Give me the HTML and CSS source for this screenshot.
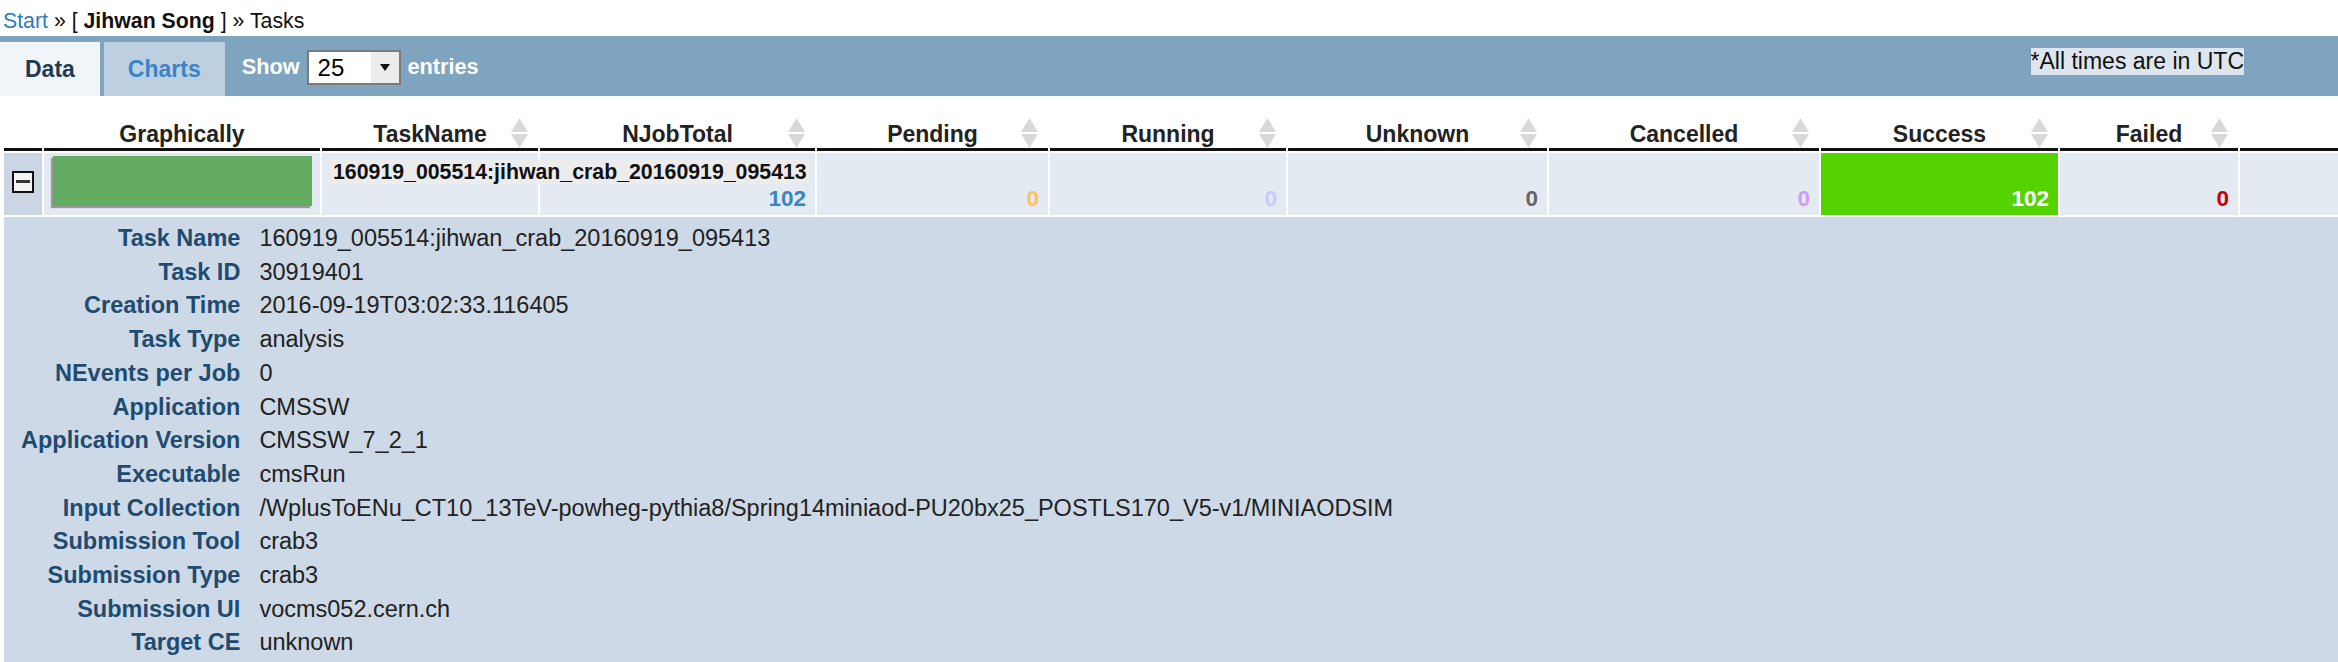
FILE: index.html
```html
<!DOCTYPE html>
<html lang="en">
<head>
    <meta charset="UTF-8">
    <title>Tasks - Jihwan Song</title>
    <link rel="stylesheet" href="styles.css">
</head>
<body>
    <div class="crumbs"><a href="#">Start</a> » [ <b>Jihwan Song</b> ] » Tasks</div>

    <div class="toolbar">
        <div class="tab active">Data</div>
        <div class="tab">Charts</div>
        <div class="length">
            Show
            <span class="select">
                <span class="select-value">25</span>
                <span class="select-btn">
                    <svg width="10" height="7" viewBox="0 0 10 7"><path d="M0 0h10L5 7z" fill="#111"/></svg>
                </span>
            </span>
            entries
        </div>
        <div class="utc">*All times are in UTC</div>
    </div>

    <table class="tasks">
        <colgroup>
            <col style="width:38px">
            <col style="width:276px">
            <col style="width:216px">
            <col style="width:275px">
            <col style="width:231px">
            <col style="width:236px">
            <col style="width:259px">
            <col style="width:270px">
            <col style="width:237px">
            <col style="width:178px">
            <col style="width:300px">
        </colgroup>
        <thead>
            <tr>
                <th></th>
                <th>Graphically</th>
                <th>TaskName<svg class="sort" width="17" height="30" viewBox="0 0 17 30"><path d="M8.5 0L17 14H0z"/><path d="M0 16h17L8.5 30z"/></svg></th>
                <th>NJobTotal<svg class="sort" width="17" height="30" viewBox="0 0 17 30"><path d="M8.5 0L17 14H0z"/><path d="M0 16h17L8.5 30z"/></svg></th>
                <th>Pending<svg class="sort" width="17" height="30" viewBox="0 0 17 30"><path d="M8.5 0L17 14H0z"/><path d="M0 16h17L8.5 30z"/></svg></th>
                <th>Running<svg class="sort" width="17" height="30" viewBox="0 0 17 30"><path d="M8.5 0L17 14H0z"/><path d="M0 16h17L8.5 30z"/></svg></th>
                <th>Unknown<svg class="sort" width="17" height="30" viewBox="0 0 17 30"><path d="M8.5 0L17 14H0z"/><path d="M0 16h17L8.5 30z"/></svg></th>
                <th>Cancelled<svg class="sort" width="17" height="30" viewBox="0 0 17 30"><path d="M8.5 0L17 14H0z"/><path d="M0 16h17L8.5 30z"/></svg></th>
                <th>Success<svg class="sort" width="17" height="30" viewBox="0 0 17 30"><path d="M8.5 0L17 14H0z"/><path d="M0 16h17L8.5 30z"/></svg></th>
                <th>Failed<svg class="sort" width="17" height="30" viewBox="0 0 17 30"><path d="M8.5 0L17 14H0z"/><path d="M0 16h17L8.5 30z"/></svg></th>
                <th></th>
            </tr>
        </thead>
        <tbody>
            <tr class="task">
                <td class="toggle"><span class="minus"></span></td>
                <td class="graph"><div class="bar-success"></div></td>
                <td class="name"><span>160919_005514:jihwan_crab_20160919_095413</span></td>
                <td class="num total">102</td>
                <td class="num pending">0</td>
                <td class="num running">0</td>
                <td class="num unknown">0</td>
                <td class="num cancelled">0</td>
                <td class="num success">102</td>
                <td class="num failed">0</td>
                <td class="num"></td>
            </tr>
            <tr class="details">
                <td colspan="11">
                    <table class="info">
                        <tr><th>Task Name</th><td>160919_005514:jihwan_crab_20160919_095413</td></tr>
                        <tr><th>Task ID</th><td>30919401</td></tr>
                        <tr><th>Creation Time</th><td>2016-09-19T03:02:33.116405</td></tr>
                        <tr><th>Task Type</th><td>analysis</td></tr>
                        <tr><th>NEvents per Job</th><td>0</td></tr>
                        <tr><th>Application</th><td>CMSSW</td></tr>
                        <tr><th>Application Version</th><td>CMSSW_7_2_1</td></tr>
                        <tr><th>Executable</th><td>cmsRun</td></tr>
                        <tr><th>Input Collection</th><td>/WplusToENu_CT10_13TeV-powheg-pythia8/Spring14miniaod-PU20bx25_POSTLS170_V5-v1/MINIAODSIM</td></tr>
                        <tr><th>Submission Tool</th><td>crab3</td></tr>
                        <tr><th>Submission Type</th><td>crab3</td></tr>
                        <tr><th>Submission UI</th><td>vocms052.cern.ch</td></tr>
                        <tr><th>Target CE</th><td>unknown</td></tr>
                    </table>
                </td>
            </tr>
        </tbody>
    </table>
</body>
</html>
```

FILE: styles.css
```css
html, body {
    overflow: hidden;
}
body {
    margin: 0;
    font-family: 'Liberation Sans', Arial, sans-serif;
    color: #222;
    background: #fff;
}
.crumbs {
    height: 36px;
    box-sizing: border-box;
    padding: 7px 0 0 3px;
    font-size: 21.3px;
    line-height: 29px;
    color: #111;
}
.crumbs a {
    color: #2c7bbd;
    text-decoration: none;
}
.toolbar {
    display: flex;
    align-items: center;
    height: 60px;
    background-color: #7fa4bf;
}
.tab {
    align-self: flex-end;
    height: 54px;
    line-height: 54px;
    padding: 0 24px;
    margin-right: 4px;
    font-size: 23px;
    font-weight: bold;
    color: #3a84c6;
    background-color: #bcd0e2;
}
.tab.active {
    padding: 0 25px;
    color: #1e3a57;
    background-color: #f2f5f8;
}
.length {
    display: flex;
    align-items: center;
    gap: 7px;
    margin-left: 13px;
    margin-top: 2px;
    font-size: 21.7px;
    font-weight: bold;
    color: #fff;
}
.select {
    display: flex;
    width: 94px;
    height: 35px;
    box-sizing: border-box;
    border: 2px solid #7b7b7b;
    background: #fff;
}
.select-value {
    flex: 1;
    padding-left: 9px;
    font-size: 24px;
    font-weight: normal;
    line-height: 31px;
    color: #000;
}
.select-btn {
    display: flex;
    align-items: center;
    justify-content: center;
    width: 28px;
    background-color: #ececec;
}
.utc {
    align-self: flex-start;
    margin: 12px 94px 0 auto;
    font-size: 23px;
    line-height: 27px;
    color: #111;
    background-color: #dde5ee;
}
.tasks {
    table-layout: fixed;
    width: 2540px;
    margin-left: 2px;
    border-collapse: separate;
    border-spacing: 2px;
}
.tasks > thead th {
    position: relative;
    height: 53px;
    box-sizing: border-box;
    padding: 23px 0 1px;
    border-bottom: 3px solid #111;
    font-size: 23px;
    line-height: 26px;
    text-align: center;
    vertical-align: bottom;
    color: #222;
    white-space: nowrap;
}
.sort {
    position: absolute;
    right: 10px;
    bottom: 0;
    fill: #d9d9d9;
}
.task td {
    height: 62px;
    box-sizing: border-box;
    background-color: #e3eaf2;
}
.task .toggle {
    padding-top: 18px;
    text-align: center;
    vertical-align: top;
    background-color: #cad6e3;
}
.minus {
    display: inline-block;
    position: relative;
    width: 22px;
    height: 22px;
    box-sizing: border-box;
    border: 2px solid #111;
    background-color: #f4f4f4;
}
.minus::after {
    content: "";
    position: absolute;
    left: 2px;
    right: 2px;
    top: 7px;
    height: 3px;
    background-color: #333;
}
.task .graph {
    padding: 3px 0 0 9px;
    vertical-align: top;
}
.bar-success {
    width: 259px;
    height: 50px;
    background-color: #64ab62;
    box-shadow: -2px 2px 1px #9a9a9a;
}
.task .name {
    padding: 8px 0 0 8px;
    vertical-align: top;
    white-space: nowrap;
    overflow: visible;
}
.task .name span {
    padding: 0 4px 0 3px;
    font-size: 21.3px;
    font-weight: bold;
    line-height: 22px;
    color: #111;
    background-color: #ececec;
}
.task .num {
    padding: 0 9px 3px 0;
    font-size: 22.5px;
    font-weight: bold;
    line-height: 26px;
    text-align: right;
    vertical-align: bottom;
}
.total { color: #3a84c6; }
.pending { color: #ffc161; }
.running { color: #c9c9ff; }
.unknown { color: #666; }
.cancelled { color: #cf9cf8; }
.failed { color: #cc0000; }
.task .success {
    color: #fff;
    background-color: #54d300;
}
.details > td {
    padding: 5px 0 40px 17px;
    background-color: #cdd9e6;
}
.info {
    border-collapse: collapse;
    font-size: 23.5px;
    line-height: 33.7px;
}
.info th {
    padding: 0 10px 0 0;
    text-align: right;
    white-space: nowrap;
    color: #1f4b70;
}
.info td {
    padding: 0 0 0 9px;
    white-space: nowrap;
    color: #222;
}
```
